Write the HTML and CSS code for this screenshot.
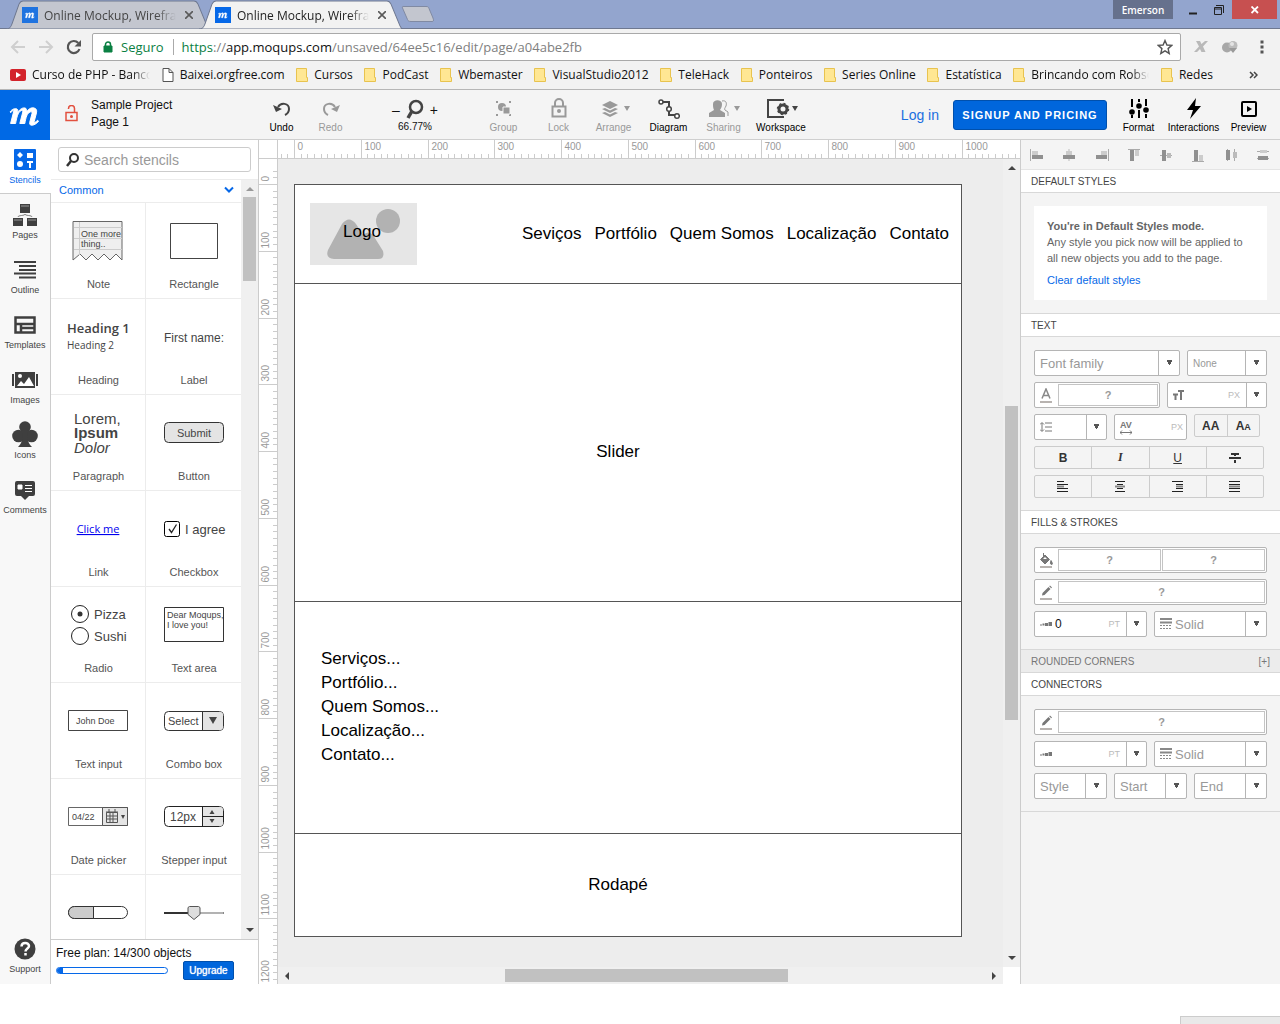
FILE: index.html
```html
<!DOCTYPE html>
<html lang="en">
<head>
<meta charset="utf-8">
<title>Online Mockup, Wireframe</title>
<link rel="stylesheet" href="styles.css">
</head>
<body>
<svg class="defs" width="0" height="0" aria-hidden="true">
  <symbol id="m-logo" viewBox="0 0 50 50"><path d="M10 22c2-3 5-4 7-3 1 .5 1 2 .7 3.500C20 19 22.500 17.500 25 18c1.700.4 1.800 2.200 1.300 4.300C28.500 19 31 17.300 34 18c3 .8 3 3 2.200 6l-2 7.500c-.3 1.500 1 1 3.500-1.300l.8 1.300c-3.500 4-9.500 5.500-8.800 1l2.300-9c.3-1.500-.6-2.200-2-1.500-3 1.500-4 5-5.200 11.500h-5l3-11.500c.3-1.500-.7-2-2-1.200-2.800 1.700-4 6-5.200 12.700h-5l3.200-12.500c.4-1.500-1-1-2.800 1.500z" fill="#fff" stroke="#fff"/></symbol>
  <symbol id="folder" viewBox="0 0 12 14"><path d="M.5.5h10v9h1v4H.5z" fill="#ffe793" stroke="#e8c34f"/></symbol>
  <symbol id="pencil" viewBox="0 0 14 16"><path d="M3 10.500 3.500 8l6-6 2 2-6 6zM10.200 1.300l.8-.8 2 2-.8.8z" fill="#777"/><path d="M1 13h12v2H1z" fill="#b8b3b0"/></symbol>
  <symbol id="weight" viewBox="0 0 12 6"><path d="M0 3.500h2v1H0zM2.500 2.500h2v2h-2zM5 2h3v3H5zM8.500 1h3.500v4H8.500z" fill="#777"/></symbol>
  <symbol id="dash" viewBox="0 0 12 12"><path d="M0 1h12M0 4.500h12" stroke="#888" stroke-width="2"/><path d="M0 7.500h12M0 10.500h12" stroke="#888" stroke-dasharray="2 1"/></symbol>
</svg>

<div class="window">
  <div class="tabstrip">
    <button class="tab"><svg class="tab-shape" viewBox="0 0 204 28" preserveAspectRatio="none"><path d="M0 28C4 28 5 26 6 23L13 4C14 2 15 1 17 1H188C190 1 191 2 192 4L201 25C202 27 203 28 204 28z" fill="#c3c6cf" stroke="#6e7890"/></svg><svg class="fav"><rect width="16" height="16" fill="#1f73e0"/><use href="#m-logo" width="16" height="16"/></svg><span class="tab-title">Online Mockup, Wirefram</span><svg class="x" viewBox="0 0 8 8"><path d="M0 0 8 8M8 0 0 8" stroke="#5a5a5a" stroke-width="1.600"/></svg></button>
    <button class="tab active"><svg class="tab-shape" viewBox="0 0 204 28" preserveAspectRatio="none"><path d="M0 28C4 28 5 26 6 23L13 4C14 2 15 1 17 1H188C190 1 191 2 192 4L201 25C202 27 203 28 204 28z" fill="#f2f2f2" stroke="#6e7890"/></svg><svg class="fav"><rect width="16" height="16" fill="#0668e8"/><use href="#m-logo" width="16" height="16"/></svg><span class="tab-title">Online Mockup, Wirefram</span><svg class="x" viewBox="0 0 8 8"><path d="M0 0 8 8M8 0 0 8" stroke="#5a5a5a" stroke-width="1.600"/></svg></button>
    <button class="newtab" aria-label="New tab"><svg width="34" height="18"><path d="M1.500 3C1 1.500 1.500 1.500 3 1.500H25C27 1.500 27.500 2 28 3.500L32 13C33 16 32.500 16.500 31 16.500H10C8 16.500 7 16 6.500 14.500z" fill="#c3c6cf" stroke="#808aa3"/></svg></button>
    <div class="wincontrols">
      <button class="user">Emerson</button>
      <button class="wc" aria-label="Minimize"><svg width="10" height="10"><path d="M1 8.500h8" stroke="#222" stroke-width="2"/></svg></button>
      <button class="wc" aria-label="Restore"><svg width="10" height="10"><path d="M.5 2.500h7v7h-7zM.5 4h7M2 .5h7.500V8" fill="none" stroke="#222"/></svg></button>
      <button class="close" aria-label="Close"><svg width="8" height="8"><path d="M.5.5 7 7M7 .5.5 7" stroke="#fff" stroke-width="1.800"/></svg></button>
    </div>
  </div>

  <div class="addressbar">
    <button class="nav" aria-label="Back"><svg width="16" height="16"><path d="M15 8H2M8 2 2 8l6 6" fill="none" stroke="#cfcfcf" stroke-width="2"/></svg></button>
    <button class="nav" aria-label="Forward"><svg width="16" height="16"><path d="M1 8h13M8 2l6 6-6 6" fill="none" stroke="#cfcfcf" stroke-width="2"/></svg></button>
    <button class="nav" aria-label="Reload"><svg width="16" height="16"><path d="M13.500 10A6 6 0 1 1 12.300 4" fill="none" stroke="#555" stroke-width="2.200"/><path d="M15 1v6.500H8.500z" fill="#555"/></svg></button>
    <div class="omnibox">
      <svg width="10" height="12"><path d="M1 5h8v6H1z" fill="#0b8043" stroke="#0b8043"/><path d="M2.500 5V3.500a2.500 2.500 0 0 1 5 0V5" fill="none" stroke="#0b8043" stroke-width="1.500"/></svg>
      <span class="secure">Seguro</span>
      <span class="url"><span class="proto">https</span>://<b>app.moqups.com</b>/unsaved/64ee5c16/edit/page/a04abe2fb</span>
      <svg width="16" height="16"><path d="M8 1.500 9.900 6l4.900.4-3.700 3.200 1.100 4.800L8 11.800l-4.200 2.600 1.100-4.800L1.200 6.400 6.100 6z" fill="none" stroke="#555" stroke-width="1.400"/></svg>
    </div>
    <svg width="16" height="16"><path d="M3 2h4l1.500 3L12 2h3l-5 5.500L12.500 13h-4L7 10l-3 3H1l5-5.500z" fill="#b9b9b9"/></svg>
    <svg width="18" height="16"><circle cx="6" cy="8.500" r="5" fill="#a8a8a8"/><circle cx="12" cy="6.500" r="4.500" fill="#bcbcbc"/><path d="m8 9 4 5 4-5z" fill="#9a9a9a"/><circle cx="11" cy="5" r="2" fill="#e4e4e4"/></svg>
    <button class="menu" aria-label="Menu"><svg width="4" height="14"><path d="M.5.500h3v3h-3zM.5 5.500h3v3h-3zM.5 10.500h3v3h-3z" fill="#555"/></svg></button>
  </div>

  <nav class="bookmarks">
    <div class="bm-list">
      <a href="#" class="bm fade"><svg width="16" height="12"><rect width="16" height="12" rx="2" fill="#d3232b"/><path d="m6 3 5 3-5 3z" fill="#fff"/></svg><span>Curso de PHP - Banco</span></a>
      <a href="#" class="bm"><svg width="12" height="14"><path d="M1 .5h6l4 4v9H1zM7 .5v4h4" fill="#fff" stroke="#555"/></svg>Baixei.orgfree.com</a>
      <a href="#" class="bm"><svg width="12" height="14"><use href="#folder"/></svg>Cursos</a>
      <a href="#" class="bm"><svg width="12" height="14"><use href="#folder"/></svg>PodCast</a>
      <a href="#" class="bm"><svg width="12" height="14"><use href="#folder"/></svg>Wbemaster</a>
      <a href="#" class="bm"><svg width="12" height="14"><use href="#folder"/></svg>VisualStudio2012</a>
      <a href="#" class="bm"><svg width="12" height="14"><use href="#folder"/></svg>TeleHack</a>
      <a href="#" class="bm"><svg width="12" height="14"><use href="#folder"/></svg>Ponteiros</a>
      <a href="#" class="bm"><svg width="12" height="14"><use href="#folder"/></svg>Series Online</a>
      <a href="#" class="bm"><svg width="12" height="14"><use href="#folder"/></svg>Estatística</a>
      <a href="#" class="bm fade"><svg width="12" height="14"><use href="#folder"/></svg><span>Brincando com Robso</span></a>
      <a href="#" class="bm"><svg width="12" height="14"><use href="#folder"/></svg>Redes</a>
    </div>
    <button class="more" aria-label="More bookmarks"><svg width="9" height="8"><path d="m1 1 3 3-3 3M5 1l3 3-3 3" fill="none" stroke="#444" stroke-width="1.500"/></svg></button>
  </nav>

  <header class="appbar">
    <a href="#" class="brand" aria-label="Moqups"><svg width="50" height="50"><use href="#m-logo"/></svg></a>
    <div class="project">
      <svg width="14" height="17"><path d="M1 7.500h11v8H1zM3.500 4V3.500a3 3 0 0 1 6 0V7" fill="none" stroke="#e2503f" stroke-width="1.500"/><circle cx="6.500" cy="11.500" r="1.500" fill="#e2503f"/></svg>
      <div><div>Sample Project</div><div>Page 1</div></div>
    </div>
    <button class="tool narrow"><svg width="20" height="24"><path d="M6 9c3-5 11-4 11 2 0 3-2 5-4 6" fill="none" stroke="#444" stroke-width="2"/><path d="m1 7 3 7 6-3z" fill="#444"/></svg>Undo</button>
    <button class="tool narrow off"><svg width="20" height="24"><path d="M14 9C11 4 3 5 3 11c0 3 2 5 4 6" fill="none" stroke="#999" stroke-width="2"/><path d="m19 7-3 7-6-3z" fill="#999"/></svg>Redo</button>
    <div class="zoom">
      <div class="zoom-row"><button aria-label="Zoom out">–</button><svg width="18" height="22"><circle cx="10" cy="8" r="6" fill="none" stroke="#444" stroke-width="2.500"/><path d="m6 12-4 7" stroke="#444" stroke-width="3.500"/></svg><button aria-label="Zoom in">+</button></div>
      <span>66.77%</span>
    </div>
    <button class="tool off"><svg width="20" height="24"><path d="M2 3h2v2H2zM15 3h2v2h-2zM2 16h2v2H2zM15 16h2v2h-2z" fill="#999"/><circle cx="8" cy="9" r="4" fill="#999"/><path d="M9 9h7v7H9z" fill="#999" stroke="#f4f4f4"/></svg>Group</button>
    <button class="tool off"><svg width="20" height="24"><path d="M3.500 8.500h13v10h-13zM6 8V5a4 4 0 0 1 8 0v3" fill="none" stroke="#999" stroke-width="2"/><circle cx="10" cy="13" r="2" fill="#999"/></svg>Lock</button>
    <button class="tool off"><svg width="34" height="24"><path d="m13 3 8 4-8 4-8-4zM5 11l3-1 5 2.500 5-2.500 3 1-8 4zM5 15l3-1 5 2.500 5-2.500 3 1-8 4zM27 8h6l-3 5z" fill="#999"/></svg>Arrange</button>
    <button class="tool"><svg width="22" height="24"><path d="M4 4h7v13h7" fill="none" stroke="#444" stroke-width="2"/><circle cx="3" cy="4" r="2" fill="#fff" stroke="#444" stroke-width="1.500"/><circle cx="11" cy="11" r="2.300" fill="#fff" stroke="#444" stroke-width="1.500"/><circle cx="19" cy="18" r="2.300" fill="#fff" stroke="#444" stroke-width="1.500"/></svg>Diagram</button>
    <button class="tool off"><svg width="34" height="24"><path d="M6 6c0-5 9-5 9 0 0 3-1 4-2 6l5 3v4H2v-4l5-3C6 10 6 8 6 6zM27 8h6l-3 5z" fill="#999"/><path d="M15 3c4-1 5 2 4 5-1 2-2 3-1 4l3 2v4" fill="none" stroke="#999"/></svg>Sharing</button>
    <button class="tool wide"><svg width="34" height="24"><path d="M20 2H4v17h16" fill="none" stroke="#444" stroke-width="2"/><circle cx="19" cy="11" r="4" fill="none" stroke="#444" stroke-width="3"/><circle cx="19" cy="11" r="5.500" fill="none" stroke="#444" stroke-width="1.500" stroke-dasharray="2 2.300"/><path d="M28 8h6l-3 5z" fill="#444"/></svg>Workspace</button>
    <div class="account">
      <a href="#" class="login">Log in</a>
      <button class="signup">SIGNUP AND PRICING</button>
      <div class="modes">
        <button class="tool"><svg width="20" height="24"><path d="M3 1v8M3 17v3M10 1v3M10 12v8M17 1v7M17 16v4" stroke="#000" stroke-width="2"/><circle cx="3" cy="14" r="2.800"/><circle cx="10" cy="8" r="2.800"/><circle cx="17" cy="12" r="2.800"/></svg>Format</button>
        <button class="tool"><svg width="20" height="24"><path d="M12 0 3 12h6L6 21l11-13h-6z"/></svg>Interactions</button>
        <button class="tool"><svg width="20" height="24"><rect x="3" y="4" width="14" height="14" rx="1" fill="none" stroke="#000" stroke-width="2"/><path d="m8 8 5 3-5 3z"/></svg>Preview</button>
      </div>
    </div>
  </header>

  <div class="workspace">
    <nav class="rail">
      <button class="rail-item on"><svg width="22" height="22"><rect width="22" height="21" rx="1" fill="#0668e8"/><path d="m6 3 3 3-3 3-3-3zM13 4h6v5h-6z" fill="#fff"/><circle cx="6" cy="15" r="3" fill="#fff"/><path d="M13 12h6v2h-2v5h-2v-5h-2z" fill="#fff"/></svg>Stencils</button>
      <button class="rail-item"><svg width="24" height="23"><path d="M7 0h10v9H7zM0 14h10v9H0zM14 14h10v9H14z" fill="#3f3f3f"/><path d="M8 2h8M1 16h8M15 16h8" stroke="#999"/><path d="M5 13c0-2 7-1 7-3 0 2 7 1 7 3" fill="none" stroke="#777"/></svg>Pages</button>
      <button class="rail-item"><svg width="22" height="22"><path d="M0 3h22M5 7h17M5 11h17M0 14.500h22M5 18.500h17" stroke="#3f3f3f" stroke-width="2"/></svg>Outline</button>
      <button class="rail-item"><svg width="22" height="22"><path d="M1.500 3.500h19v15h-19zM1 10h20M7 10v8M7 14h14" fill="none" stroke="#3f3f3f" stroke-width="2.500"/></svg>Templates</button>
      <button class="rail-item"><svg width="26" height="22"><path d="M3 3h20v16H3zM0 5h2v12H0zM24 5h2v12h-2z" fill="#3f3f3f"/><circle cx="8" cy="7" r="2" fill="#fff"/><path d="m5 17 4-5 3 3 5-7 5 9z" fill="#fff"/></svg>Images</button>
      <button class="rail-item tall"><svg width="26" height="26"><circle cx="13" cy="6" r="5.800" fill="#3f3f3f"/><circle cx="6.500" cy="15" r="6.300" fill="#3f3f3f"/><circle cx="19.500" cy="15" r="6.300" fill="#3f3f3f"/><path d="M11 10h4c0 8 1 12 5 16H6c4-4 5-8 5-16z" fill="#3f3f3f"/></svg>Icons</button>
      <button class="rail-item"><svg width="22" height="22"><path d="M3 2h16q2 0 2 2v11q0 2-2 2h-4l-4 4-4-4H3q-2 0-2-2V4q0-2 2-2z" fill="#3f3f3f"/><path d="M4 6h4v4H4zM11 6.500h7M11 9.500h7M11 12.500h7" fill="#fff" stroke="#fff"/></svg>Comments</button>
      <button class="rail-item support"><svg width="22" height="22"><circle cx="11" cy="11" r="10.500" fill="#3f3f3f"/><path d="M7.500 8.500c0-5 7.500-4.500 7.500-.5 0 2.500-3.500 2.500-3.500 5.500M11.500 15v2.500" fill="none" stroke="#fff" stroke-width="2.500"/></svg>Support</button>
    </nav>

    <aside class="stencils">
      <label class="search"><svg width="14" height="16"><circle cx="8" cy="6" r="4" fill="none" stroke="#333" stroke-width="2"/><path d="m5 9-4 5" stroke="#333" stroke-width="2.500"/></svg><input type="text" placeholder="Search stencils" aria-label="Search stencils"></label>
      <div class="shelf">
        <div class="shelf-main">
          <button class="category">Common<svg width="10" height="8"><path d="m1 1.500 4 4 4-4" fill="none" stroke="#0668e8" stroke-width="2"/></svg></button>
          <div class="stencil-grid">
            <figure><svg viewBox="-47 0 94 70"><path d="M-25 18.500h49V57l-6-6-6 6-6-6-6 6-6-6-6 6-6-6-7 6z" fill="#efefef" stroke="#666"/><path d="M-24 24.500h48M-24 35.500h48M-24 46.500h48M-18.500 19v33" stroke="#ccc"/><text x="-17" y="34" font-size="9">One more</text><text x="-17" y="44" font-size="9">thing..</text></svg><figcaption>Note</figcaption></figure>
            <figure><svg viewBox="-47 0 94 70"><path d="M-23.500 20.500h47v35h-47z" fill="#fff" stroke="#444"/></svg><figcaption>Rectangle</figcaption></figure>
            <figure><svg viewBox="-47 0 94 70" class="humanist"><text x="-31" y="34" font-size="13" font-weight="600">Heading 1</text><text x="-31" y="50" font-size="10">Heading 2</text></svg><figcaption>Heading</figcaption></figure>
            <figure><svg viewBox="-47 0 94 70"><text x="0" y="43" font-size="12" text-anchor="middle">First name:</text></svg><figcaption>Label</figcaption></figure>
            <figure><svg viewBox="-47 0 94 70"><text x="-24" y="29" font-size="15">Lorem,</text><text x="-24" y="43" font-size="15" font-weight="700">Ipsum</text><text x="-24" y="58" font-size="15" font-style="italic">Dolor</text></svg><figcaption>Paragraph</figcaption></figure>
            <figure><svg viewBox="-47 0 94 70"><rect x="-29.500" y="27.500" width="59" height="20" rx="4" fill="#e4e4e4" stroke="#333"/><text x="0" y="42" font-size="11" text-anchor="middle">Submit</text></svg><figcaption>Button</figcaption></figure>
            <figure><svg viewBox="-47 0 94 70" class="humanist"><text x="0" y="42" font-size="11" text-anchor="middle" class="linky">Click me</text></svg><figcaption>Link</figcaption></figure>
            <figure><svg viewBox="-47 0 94 70"><rect x="-29.500" y="30.500" width="15" height="15" rx="2" fill="#fff" stroke="#000"/><path d="m-25 38 2.500 3.500 5-8" fill="none" stroke="#222" stroke-width="1.300"/><text x="-9" y="43" font-size="13">I agree</text></svg><figcaption>Checkbox</figcaption></figure>
            <figure><svg viewBox="-47 0 94 70"><circle cx="-18" cy="27" r="8.500" fill="#fff" stroke="#222"/><circle cx="-18" cy="27" r="2.500" fill="#333"/><circle cx="-18" cy="49" r="8.500" fill="#fff" stroke="#222"/><text x="-4" y="32" font-size="13">Pizza</text><text x="-4" y="54" font-size="13">Sushi</text></svg><figcaption>Radio</figcaption></figure>
            <figure><svg viewBox="-47 0 94 70"><path d="M-29.500 20.500h59v34h-59z" fill="#fff" stroke="#333"/><text x="-27" y="31" font-size="9">Dear Moqups,</text><text x="-27" y="41" font-size="9">I love you!</text></svg><figcaption>Text area</figcaption></figure>
            <figure><svg viewBox="-47 0 94 70"><path d="M-29.500 27.500h59v20h-59z" fill="#fff" stroke="#444"/><text x="-22" y="41" font-size="9">John Doe</text></svg><figcaption>Text input</figcaption></figure>
            <figure><svg viewBox="-47 0 94 70"><rect x="-29.500" y="28.500" width="59" height="19" rx="4" fill="#fff" stroke="#333"/><path d="M9 29h17q3 0 3 3v12q0 3-3 3H9z" fill="#e4e4e4"/><path d="M8.500 28v20" stroke="#333"/><path d="M15 34h8l-4 7z" fill="#444"/><text x="-26" y="42" font-size="11">Select</text></svg><figcaption>Combo box</figcaption></figure>
            <figure><svg viewBox="-47 0 94 70"><path d="M-29.500 28.500h59v18h-59z" fill="#fff" stroke="#666"/><path d="M4.500 28.500h25v18h-25z" fill="#e4e4e4" stroke="#555"/><path d="M8.500 33.500h11v10h-11zM8 33h12M11 30v3M17 30v3M12 34v9M15 34v9M9 37h11M9 40h11" fill="none" stroke="#555"/><path d="M23 36h4l-2 4z" fill="#444"/><text x="-26" y="41" font-size="9">04/22</text></svg><figcaption>Date picker</figcaption></figure>
            <figure><svg viewBox="-47 0 94 70"><rect x="-29.500" y="27.500" width="59" height="20" rx="4" fill="#fff" stroke="#222"/><path d="M9 28h17q3 0 3 3v13q0 3-3 3H9z" fill="#e4e4e4"/><path d="M8.500 27v21M8 37.500h22" stroke="#222"/><path d="m18 31 2.500 4h-5zM18 44l2.500-4h-5z" fill="#444"/><text x="-24" y="42" font-size="12">12px</text></svg><figcaption>Stepper input</figcaption></figure>
            <figure><svg viewBox="-47 0 94 70"><rect x="-29.500" y="31.500" width="59" height="12" rx="6" fill="#fff" stroke="#333"/><path d="M-4.500 31.500h-19a6 6 0 0 0 0 12h19z" fill="#ccc" stroke="#333"/></svg></figure>
            <figure><svg viewBox="-47 0 94 70"><path d="M-30 38H0" stroke="#333" stroke-width="2"/><path d="M0 38h30" stroke="#888" stroke-width="2"/><path d="M0 38h29" stroke="#ddd"/><path d="M-4.500 31.500h9l1.500 1v7l-6 5-6-5v-7z" fill="#ddd" stroke="#555"/></svg></figure>
          </div>
        </div>
        <div class="scroll-v"><i class="arrow up light"></i><span class="thumb shelf-thumb"></span><i class="arrow down"></i></div>
      </div>
      <div class="plan">
        <span>Free plan: 14/300 objects</span>
        <div class="plan-row"><span class="meter"><span style="width:5%"></span></span><button class="upgrade">Upgrade</button></div>
      </div>
    </aside>

    <main class="stage">
      <div class="corner"></div>
      <svg class="ruler-h" id="rulerH"></svg>
      <svg class="ruler-v" id="rulerV"></svg>
      <div class="canvas">
        <div class="artboard">
          <section class="ab-head">
            <svg width="107" height="62"><rect width="107" height="62" fill="#e6e6e6"/><path d="M32 21Q39 12 46 21L53 32Q58 27 63 32L73 48Q75 56 68 56H24Q15 55 18 47z" fill="#b2b2b2"/><circle cx="78" cy="18" r="12" fill="#b2b2b2"/><text x="52" y="34" text-anchor="middle" class="logo-text">Logo</text></svg>
            <div class="ab-nav"><span>Seviços</span><span>Portfólio</span><span>Quem Somos</span><span>Localização</span><span>Contato</span></div>
          </section>
          <section class="ab-slider">Slider</section>
          <section class="ab-list"><div>Serviços...</div><div>Portfólio...</div><div>Quem Somos...</div><div>Localização...</div><div>Contato...</div></section>
          <section class="ab-foot">Rodapé</section>
        </div>
      </div>
      <div class="scroll-v"><i class="arrow up"></i><span class="thumb canvas-thumb"></span><i class="arrow down"></i></div>
      <div class="scroll-h"><i class="arrow left"></i><span class="track"><span class="thumb-h"></span></span><i class="arrow right"></i></div>
    </main>

    <aside class="inspector">
      <div class="align">
        <button aria-label="Align left"><svg width="14" height="14"><path d="M.5 1v12" stroke="#aaa"/><path d="M2 3h6v4H2z" fill="#ccc"/><path d="M2 7h11v4H2z" fill="#909090"/></svg></button>
        <button aria-label="Align center"><svg width="14" height="14"><path d="M7 1v12" stroke="#bbb"/><path d="M4 3h6v4H4z" fill="#ccc"/><path d="M1 7h12v4H1z" fill="#909090"/></svg></button>
        <button aria-label="Align right"><svg width="14" height="14"><path d="M13.500 1v12" stroke="#aaa"/><path d="M6 3h6v4H6z" fill="#ccc"/><path d="M1 7h11v4H1z" fill="#909090"/></svg></button>
        <button aria-label="Align top"><svg width="14" height="14"><path d="M1 1.500h12" stroke="#aaa"/><path d="M3 2h4v11H3z" fill="#909090"/><path d="M8 2h4v6H8z" fill="#ccc"/></svg></button>
        <button aria-label="Align middle"><svg width="14" height="14"><path d="M1 7.500h12" stroke="#aaa"/><path d="M3 2h4v11H3z" fill="#909090"/><path d="M8 5h4v5H8z" fill="#bbb"/></svg></button>
        <button aria-label="Align bottom"><svg width="14" height="14"><path d="M1 13.500h12" stroke="#aaa"/><path d="M3 2h4v11H3z" fill="#909090"/><path d="M8 7h4v6H8z" fill="#ccc"/></svg></button>
        <button aria-label="Distribute horizontally"><svg width="14" height="14"><path d="M3.500 1v12M10.500 1v12" stroke="#aaa"/><path d="M2 2h4v10H2z" fill="#909090"/><path d="M9 4h4v6H9z" fill="#bbb"/></svg></button>
        <button aria-label="Distribute vertically"><svg width="14" height="14"><path d="M1 3.500h12M1 10.500h12" stroke="#aaa"/><path d="M4 2h7v3H4z" fill="#ccc"/><path d="M2 8h10v4H2z" fill="#909090"/></svg></button>
      </div>
      <h2>DEFAULT STYLES</h2>
      <div class="group note-group"><div class="note"><strong>You're in Default Styles mode.</strong><p>Any style you pick now will be applied to<br>all new objects you add to the page.</p><a href="#">Clear default styles</a></div></div>

      <h2>TEXT</h2>
      <div class="group">
        <div class="row"><span class="pick grow"><select aria-label="Font family"><option>Font family</option></select></span><span class="pick w80 small"><select aria-label="Font weight"><option>None</option></select></span></div>
        <div class="row"><span class="swatches grow"><svg width="14" height="16"><path d="M3 10.500 7 1l4 9.500M4.500 7.500h5" fill="none" stroke="#888" stroke-width="1.500"/><path d="M1 13h12v2H1z" fill="#b8b3b0"/></svg><button aria-label="Text color">?</button></span>
          <span class="pick w100"><svg width="12" height="10"><path d="M5 1h6M8 1v9M0 4.500h5M2.500 4.500V10" stroke="#777" stroke-width="2"/></svg><input type="text" aria-label="Font size"><em>PX</em><i class="drop"></i></span></div>
        <div class="row thirds"><span class="pick"><svg width="12" height="10"><path d="M2 1v8M0 2.500 2 .5l2 2M0 7.500l2 2 2-2M5 1h7M5 5h7M5 9h7" fill="none" stroke="#777"/></svg><input type="text" aria-label="Line height"><i class="drop"></i></span>
          <span class="pick"><span class="av">AV<svg width="12" height="5"><path d="M0 2.500h12M2 .5l-2 2 2 2M10 .5l2 2-2 2" fill="none" stroke="#777"/></svg></span><input type="text" aria-label="Letter spacing"><em>PX</em></span>
          <span class="toggles caps"><button>AA</button><button>A<small>A</small></button></span></div>
        <div class="toggles"><button aria-label="Bold"><b>B</b></button><button aria-label="Italic"><b class="it">I</b></button><button aria-label="Underline"><u>U</u></button><button aria-label="Strikethrough"><svg width="12" height="10"><path d="M2 1h8M0 5h12M6 1v9" stroke="#333" stroke-width="2"/><path d="M0 3.500h12M0 6.500h12" stroke="#f4f4f4"/></svg></button></div>
        <div class="toggles"><button aria-label="Left"><svg width="12" height="11"><path d="M0 .5h7M0 3.500h11M0 7.500h11M0 10.500h11" stroke="#222"/><path d="M0 5.500h7" stroke="#888" stroke-width="2"/></svg></button><button aria-label="Center"><svg width="12" height="11"><path d="M1 .5h10M3 3.500h6M3 7.500h6M1 10.500h10" stroke="#222"/><path d="M1 5.500h10" stroke="#888" stroke-width="2"/></svg></button><button aria-label="Right"><svg width="12" height="11"><path d="M0 .5h11M4 3.500h7M4 7.500h7M0 10.500h11" stroke="#222"/><path d="M4 5.500h7" stroke="#888" stroke-width="2"/></svg></button><button aria-label="Justify"><svg width="12" height="11"><path d="M0 .5h11M0 3.500h11M0 7.500h11M0 10.500h11" stroke="#222"/><path d="M0 5.500h11" stroke="#888" stroke-width="2"/></svg></button></div>
      </div>

      <h2>FILLS &amp; STROKES</h2>
      <div class="group">
        <div class="row"><span class="swatches grow"><svg width="14" height="16"><path d="m6 2 4.500 4.500L6 11 1.500 6.500zM4.500 0v4M12 7.500q2.500 4 .5 4t-.5-4z" fill="#777" stroke="#777"/><path d="M4 6h4L6 4z" fill="#fff"/><path d="M1 13h12v2H1z" fill="#b8b3b0"/></svg><button aria-label="Fill">?</button><button aria-label="Second fill">?</button></span></div>
        <div class="row"><span class="swatches grow"><svg width="14" height="16"><use href="#pencil"/></svg><button aria-label="Stroke color">?</button></span></div>
        <div class="row halves"><span class="pick"><svg width="12" height="6"><use href="#weight"/></svg><input type="text" value="0" aria-label="Stroke width"><em>PT</em><i class="drop"></i></span><span class="pick"><svg width="12" height="12"><use href="#dash"/></svg><select aria-label="Stroke style"><option>Solid</option></select></span></div>
      </div>
      <h2 class="closed">ROUNDED CORNERS<button aria-label="Expand rounded corners">[+]</button></h2>
      <h2>CONNECTORS</h2>
      <div class="group">
        <div class="row"><span class="swatches grow"><svg width="14" height="16"><use href="#pencil"/></svg><button aria-label="Connector color">?</button></span></div>
        <div class="row halves"><span class="pick"><svg width="12" height="6"><use href="#weight"/></svg><input type="text" aria-label="Connector width"><em>PT</em><i class="drop"></i></span><span class="pick"><svg width="12" height="12"><use href="#dash"/></svg><select aria-label="Connector stroke"><option>Solid</option></select></span></div>
        <div class="row thirds"><span class="pick"><select aria-label="Connector style"><option>Style</option></select></span><span class="pick"><select aria-label="Connector start"><option>Start</option></select></span><span class="pick"><select aria-label="Connector end"><option>End</option></select></span></div>
      </div>
    </aside>
  </div>
</div>
<footer class="below"><div class="status-corner"></div></footer>
<script src="rulers.js"></script>
</body>
</html>
```
FILE: styles.css
```css
* { box-sizing: border-box; }
body { margin: 0; min-height: 100vh; background: #fff; font-family: "Liberation Sans", Arial, sans-serif; font-size: 12px; color: #111; overflow: hidden; }
button, input, select { font: inherit; color: inherit; margin: 0; padding: 0; border: 0; background: none; border-radius: 0; }
a { color: inherit; text-decoration: none; }
svg { flex: none; display: block; }
.defs { position: absolute; }
.window { display: flex; flex-direction: column; height: calc(100vh - 40px); }

/* browser frame */
.tabstrip { display: flex; height: 29px; padding-left: 6px; background: #93a5ce; border-bottom: 1px solid #6e7890; font-family: "Open Sans", sans-serif; }
.tab { position: relative; display: flex; align-items: center; width: 204px; height: 29px; padding: 1px 13px 0 16px; margin-right: -11px; color: #444; }
.tab.active { color: #222; z-index: 1; }
.tab > * { position: relative; }
.tab .tab-shape { position: absolute; left: 0; top: 0; width: 100%; height: 29px; }
.fav { width: 16px; height: 16px; margin-right: 6px; }
.tab-title { flex: 1; overflow: hidden; white-space: nowrap; text-align: left; margin-right: 9px; mask-image: linear-gradient(to right, #000 85%, transparent); }
.x { width: 8px; height: 8px; margin-right: 4px; }
.newtab { align-self: center; margin-left: 9px; }
.wincontrols { display: flex; align-items: flex-start; margin-left: auto; padding-right: 3px; }
.user { width: 60px; height: 19px; background: #66718d; color: #fff; margin-right: 7px; font-size: 10px; font-weight: 600; line-height: 18px; }
.wc { width: 26px; height: 19px; display: grid; place-items: center; }
.close { width: 45px; height: 19px; background: #c75050; display: grid; place-items: center; }
.addressbar { display: flex; align-items: center; gap: 12px; height: 32px; padding: 4px 16px 0 10px; background: #f2f2f2; }
.nav { width: 16px; height: 16px; }
.addressbar .omnibox { flex: 1; display: flex; align-items: center; height: 28px; padding: 0 7px 0 10px; background: #fff; border: 1px solid #a9a9a9; border-radius: 2px; font: 13px "Open Sans", sans-serif; margin-left: -2px; }
.menu { margin-left: 9px; }
.secure { color: #0b8043; padding: 0 9px 0 8px; border-right: 1px solid #aaa; line-height: 16px; }
.url { flex: 1; padding-left: 8px; color: #808080; white-space: nowrap; }
.url b { font-weight: 400; color: #111; }
.proto { color: #0b8043; }
.bookmarks { display: flex; align-items: center; height: 29px; padding: 0 22px 1px 10px; background: #f2f2f2; border-bottom: 1px solid #b6b6b6; font: 12px "Open Sans", sans-serif; }
.bm-list { display: flex; flex: 1; justify-content: space-between; }
.bm { display: flex; align-items: center; gap: 6px; white-space: nowrap; }
.fade span { width: 118px; overflow: hidden; mask-image: linear-gradient(to right, #000 85%, transparent); }
.more { margin-left: 36px; }

/* app toolbar */
.appbar { display: flex; height: 50px; background: #f4f4f4; border-bottom: 1px solid #cfcfcf; flex: none; }
.brand { width: 50px; height: 50px; background: #0069e5; }
.project { display: flex; width: 207px; padding: 7px 0 0 15px; gap: 12px; line-height: 17px; }
.project svg { margin-top: 8px; }
.tool { display: flex; flex-direction: column; align-items: center; width: 55px; padding-top: 8px; font-size: 10px; line-height: 12px; color: #000; }
.narrow { width: 49px; }
.wide { width: 60px; }
.off { color: #999; }
.zoom { width: 60px; margin: 0 31px 0 30px; padding-top: 9px; text-align: center; font-size: 10px; line-height: 12px; }
.zoom-row { display: flex; justify-content: center; align-items: center; gap: 6px; font-size: 14px; height: 22px; }
.account { display: flex; align-items: center; margin-left: auto; padding-right: 4px; }
.login { font-size: 14px; color: #1a6fe0; margin-right: 14px; }
.signup { width: 154px; height: 30px; background: #0066dc; border: 1px solid #0050ad; border-radius: 3px; color: #fff; font-size: 11px; font-weight: 700; letter-spacing: 1px; white-space: nowrap; }
.modes { display: flex; align-self: stretch; margin-left: 4px; }

/* work area */
.workspace { display: flex; flex: 1; min-height: 0; }
.rail { display: flex; flex-direction: column; width: 51px; background: #f8f8f8; border-right: 1px solid #ccc; }
.rail-item { display: flex; flex-direction: column; align-items: center; gap: 3px; height: 55px; padding-top: 9px; font-size: 9px; line-height: 12px; color: #444; }
.rail-item svg { height: 22px; }
.rail-item.tall { padding-top: 6px; gap: 2px; }
.rail-item.tall svg { height: 26px; }
.rail-item.on { width: 51px; height: 54px; padding-right: 1px; background: #fff; color: #0668e8; border-bottom: 1px solid #ccc; margin-bottom: 1px; }
.support { margin-top: auto; }
.stencils { display: flex; flex-direction: column; width: 208px; border-right: 1px solid #ccc; background: #fff; }
.search { display: flex; align-items: center; gap: 4px; height: 25px; margin: 7px; padding-left: 7px; border: 1px solid #ccc; border-radius: 3px; }
.search input { width: 100%; min-width: 0; font-size: 14px; outline: 0; }
.search input::placeholder { color: #999; opacity: 1; }
.shelf { display: flex; flex: 1; min-height: 0; border-top: 1px solid #ececec; }
.shelf-main { flex: 1; overflow: hidden; }
.category { display: flex; justify-content: space-between; align-items: center; width: 100%; height: 23px; padding: 0 7px 2px 8px; font-size: 11px; color: #0668e8; border-bottom: 1px solid #ececec; }
.stencil-grid { display: grid; grid-template-columns: 1fr 1fr; }
.stencil-grid figure { margin: 0; height: 96px; border-bottom: 1px solid #ececec; text-align: center; }
.stencil-grid figure:nth-child(odd) { border-right: 1px solid #ececec; }
.stencil-grid svg { width: 94px; height: 70px; margin: 0 auto; fill: #444; }
.stencil-grid figcaption { padding-left: 1px; font-size: 11px; line-height: 22px; color: #555; }
.humanist { font-family: "Open Sans", sans-serif; }
.linky { fill: #0000ee; text-decoration: underline; }
.plan { height: 45px; padding: 5px 5px 0; border-top: 1px solid #ccc; line-height: 16px; }
.plan-row { display: flex; align-items: center; gap: 15px; }
.meter { width: 112px; height: 7px; border: 1px solid #0668e8; border-radius: 4px; overflow: hidden; }
.meter span { display: block; height: 100%; background: #0668e8; }
.upgrade { width: 51px; height: 19px; background: #0066dc; border: 1px solid #0050ad; border-radius: 2px; color: #fff; font-size: 10px; line-height: 16px; text-shadow: 0 0 1px #fff; }

/* scrollbars */
.scroll-v { display: flex; flex-direction: column; align-items: center; width: 17px; background: #f0f0f0; padding: 7px 0; }
.scroll-h { display: flex; align-items: center; grid-column: 2; background: #f0f0f0; padding: 0 7px; }
.arrow { width: 0; height: 0; border: 4px solid transparent; flex: none; }
.up { border-top: 0; border-bottom-color: #444; }
.light { border-bottom-color: #999; }
.down { border-bottom: 0; border-top-color: #444; margin-top: auto; }
.left { border-left: 0; border-right-color: #444; }
.right { border-right: 0; border-left-color: #444; }
.thumb { width: 13px; background: #c1c1c1; }
.shelf-thumb { height: 84px; margin-top: 6px; }
.canvas-thumb { height: 39.5%; margin-top: 236px; }
.track { flex: 1; padding-left: 30.4%; }
.thumb-h { display: block; width: 58%; height: 13px; background: #c1c1c1; }

/* stage */
.stage { flex: 1; min-width: 0; display: grid; grid-template: 19px minmax(0, 1fr) 17px / 19px minmax(0, 1fr) 17px; background: #fff; }
.corner { border: solid #ccc; border-width: 0 1px 1px 0; }
.ruler-h { grid-column: 2 / 4; width: 100%; height: 19px; border-bottom: 1px solid #ccc; }
.ruler-v { grid-row: 2 / 4; width: 19px; height: 100%; border-right: 1px solid #ccc; }
.ruler-h text, .ruler-v text { font-size: 10px; fill: #999; }
.ruler-h path, .ruler-v path { stroke: #ccc; }
.canvas { display: flex; padding: 25px 41px 30px 16px; background: #ededed; }
.artboard { flex: 1; display: grid; grid-template-rows: minmax(0, 98fr) minmax(0, 319fr) minmax(0, 232fr) minmax(0, 103fr); background: #fff; border: 1px solid #555; font-size: 17px; line-height: 24px; color: #000; }
.artboard section + section { border-top: 1px solid #555; }
.ab-head { display: flex; justify-content: space-between; align-items: center; padding: 0 12px 0 15px; }
.ab-nav { display: flex; justify-content: space-between; width: 427px; }
.logo-text { font-size: 17px; }
.ab-slider { display: grid; place-items: center; padding: 18px 20px 0 0; }
.ab-list { padding: 45px 26px 0; }
.ab-foot { display: grid; place-items: center; padding-right: 20px; }

/* inspector */
.inspector { width: 260px; border-left: 1px solid #ccc; background: #f4f4f4; color: #999; }
.align { display: flex; justify-content: space-between; align-items: center; height: 30px; padding: 0 10px 0 9px; border-bottom: 1px solid #e4e4e4; }
.inspector h2 { display: flex; justify-content: space-between; align-items: center; height: 23px; margin: 0; padding: 0 10px; background: #fff; border-bottom: 1px solid #d8d8d8; font-size: 10px; font-weight: 400; color: #444; }
.inspector .closed { background: #ececec; color: #777; }
.group { display: flex; flex-direction: column; gap: 6px; padding: 13px 13px 12px; border-bottom: 1px solid #d8d8d8; }
.note-group { padding-bottom: 13px; }
.note { background: #fff; height: 94px; padding: 12px 13px; line-height: 16px; font-size: 11px; color: #666; }
.note p { margin: 0 0 6px; white-space: nowrap; }
.note a { color: #0668e8; }
.row { display: flex; gap: 7px; height: 26px; }
.grow { flex: 1; min-width: 0; }
.w80 { width: 80px; }
.w100 { width: 100px; }
.thirds > *, .halves > * { flex: 1 1 0; min-width: 0; }
.pick { display: flex; align-items: center; gap: 3px; padding-left: 5px; background: #fff; border: 1px solid #b5b5b5; border-radius: 2px; font-size: 13px; }
.pick select { flex: 1; align-self: stretch; min-width: 0; appearance: none; outline: 0; }
.pick input { flex: 1; min-width: 0; width: 0; font-size: 12px; color: #111; outline: 0; }
.pick.small { font-size: 10px; }
.pick em { font-style: normal; font-size: 9px; color: #bbb; margin-right: 3px; }
.pick:has(select)::after, .drop { content: ""; align-self: stretch; width: 20px; border-left: 1px solid #b5b5b5; background: linear-gradient(#555, #555) 50% 9px / 5px 2px no-repeat, linear-gradient(#555, #555) 50% 11px / 3px 2px no-repeat, linear-gradient(#555, #555) 50% 13px / 1px 1px no-repeat; }
.swatches { display: flex; gap: 1px; padding: 1px; background: #fff; border: 1px solid #b5b5b5; border-radius: 2px; }
.swatches svg { margin: 4px 4px 0 3px; }
.swatches button { flex: 1; border: 1px solid #c4c4c4; font-size: 11px; font-weight: 700; }
.av { font-size: 9px; font-weight: 700; line-height: 10px; color: #777; }
.toggles { display: flex; height: 23px; width: 230px; border: 1px solid #ccc; border-radius: 2px; color: #333; font-size: 12px; }
.toggles button { flex: 1; display: grid; place-items: center; }
.toggles button + button { border-left: 1px solid #ccc; }
.it { font-family: "Liberation Serif", serif; font-style: italic; }
.thirds .caps { flex: none; width: 66px; font-weight: 700; margin-right: 7px; }
.toggles.caps button { display: block; }
.caps small { font-size: 9px; }

/* page below the app window */
.below { display: flex; height: 40px; justify-content: flex-end; align-items: flex-end; }
.status-corner { width: 100px; height: 8px; background: #e9e9e9; border: solid #ccc; border-width: 1px 0 0 1px; }
```
FILE: rulers.js
```js
// Draws ruler ticks every 10 units and labels every 100 at the current zoom.
const ZOOM = 0.6677;

function drawRuler(svg, origin, vertical) {
  const box = svg.getBoundingClientRect();
  const length = vertical ? box.height : box.width;
  let ticks = "";
  let labels = "";
  for (let unit = -20; origin + unit * ZOOM <= length + 4; unit += 10) {
    const at = Math.round(origin + unit * ZOOM) + 0.5;
    const major = unit % 100 === 0;
    const from = major ? 0 : 14;
    ticks += vertical ? `M${from} ${at}H19` : `M${at} ${from}V19`;
    if (major) {
      labels += vertical
        ? `<text transform="translate(10 ${at - 3}) rotate(-90)">${unit}</text>`
        : `<text x="${at + 3}" y="10">${unit}</text>`;
    }
  }
  svg.innerHTML = `<path d="${ticks}"/>${labels}`;
}

function drawRulers() {
  drawRuler(document.getElementById("rulerH"), 16, false);
  drawRuler(document.getElementById("rulerV"), 25, true);
}

drawRulers();
window.addEventListener("resize", drawRulers);
```
